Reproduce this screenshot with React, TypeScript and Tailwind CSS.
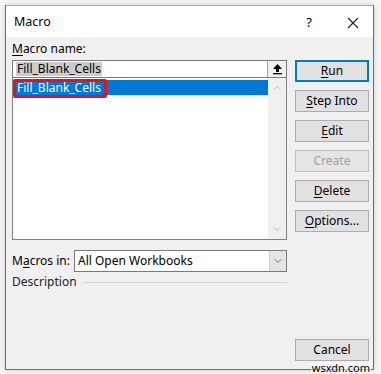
import { ChevronDown, ChevronUp } from 'lucide-react'

function Btn({ label, u, rest, primary, disabled }: { label?: string; u?: string; rest?: string; primary?: boolean; disabled?: boolean }) {
  return (
    <div
      className={`h-[22px] w-[74px] flex items-center justify-center text-[12px] bg-[#e1e1e1] ${
        primary ? 'border-2 border-[#0078d7]' : 'border border-[#adadad]'
      } ${disabled ? 'text-[#a0a0a0] border-[#bfbfbf] bg-[#e5e5e5]' : 'text-black'}`}
    >
      {u ? (
        <span>
          <span className="underline underline-offset-2">{u}</span>
          {rest}
        </span>
      ) : (
        label
      )}
    </div>
  )
}

export default function App() {
  return (
    <div className="w-[381px] h-[374px] bg-[#f7f7f7] pt-[5px] pl-[5px]" style={{ fontFamily: '"Noto Sans", "Open Sans", sans-serif' }}>
      <div className="relative w-[369px] h-[365px] bg-[#f0f0f0] border border-[#6d6d6d] border-t-[#a8a8a8] shadow-[0_0_6px_rgba(0,0,0,0.18)] flex flex-col">
        {/* title bar */}
        <div className="h-[31px] bg-white flex items-center pl-[8px] pt-[2px] text-[12.5px] text-black">
          <span className="flex-1">Macro</span>
          <span className="w-[20px] text-center mr-[28px] text-[13px]">?</span>
          <svg width="12" height="12" viewBox="0 0 12 12" className="mr-[14px]">
            <path d="M1 1 L11 11 M11 1 L1 11" stroke="#222" strokeWidth="1.1" />
          </svg>
        </div>

        <div className="flex flex-1 pl-[6px] pr-[4px]">
          {/* left column */}
          <div className="w-[275px] flex flex-col">
            <div className="h-[23px] pt-[5px] text-[12px] leading-[14px]">
              <span className="underline underline-offset-2">M</span>acro name:
            </div>
            <div className="h-[18px] bg-white border border-[#7a7a7a] flex items-center pl-[3px] relative">
              <span className="bg-[#cccccc] text-[12px] leading-[14px] px-px">Fill_Blank_Cells</span>
              <div className="absolute right-0 top-0 h-[16px] w-[19px] border-l border-[#a0a0a0] bg-[#f0f0f0] flex items-center justify-center">
                <svg width="11" height="12" viewBox="0 0 11 12">
                  <path d="M5.5 1 L10 6 L7 6 L7 9 L4 9 L4 6 L1 6 Z" fill="#000" />
                  <rect x="1" y="10" width="9" height="1.3" fill="#000" />
                </svg>
              </div>
            </div>
            <div className="h-[162px] bg-white border border-[#828282] border-t-0 flex relative">
              <div className="flex-1 pt-[2px] pl-px">
                <div className="h-[15px] bg-[#0078d7] text-white text-[12px] leading-[15px] pl-[3px]">Fill_Blank_Cells</div>
              </div>
              <div className="w-[18px] bg-[#f0f0f0] flex flex-col items-center justify-between py-[4px] text-[#bdbdbd]">
                <ChevronUp size={12} strokeWidth={2} />
                <ChevronDown size={12} strokeWidth={2} />
              </div>
              <div className="absolute left-0 top-[1px] w-[94px] h-[19px] border-[3px] border-[#e0141e] rounded-[2px]" />
            </div>
            <div className="flex items-center mt-[10px] h-[22px]">
              <span className="w-[62px] text-[12px]">
                M<span className="underline underline-offset-2">a</span>cros in:
              </span>
              <div className="flex-1 h-[22px] bg-white border border-[#7a7a7a] flex items-center">
                <span className="flex-1 pl-[3px] text-[12px]">All Open Workbooks</span>
                <div className="w-[17px] h-[20px] bg-[#e5e5e5] border-l border-[#cfcfcf] flex items-center justify-center text-[#555]">
                  <ChevronDown size={12} strokeWidth={1.5} />
                </div>
              </div>
            </div>
            <div className="flex items-center h-[20px]">
              <span className="text-[12px] text-[#222]">Description</span>
              <div className="flex-1 ml-[6px] h-px bg-[#d6d6d6]" />
            </div>
          </div>

          {/* right buttons */}
          <div className="ml-[8px] flex flex-col pt-[23px] pb-[8px]">
            <div className="flex flex-col gap-[8px]">
              <Btn u="R" rest="un" primary />
              <Btn u="S" rest="tep Into" />
              <Btn u="E" rest="dit" />
              <Btn label="Create" disabled />
              <Btn u="D" rest="elete" />
              <Btn u="O" rest="ptions..." />
            </div>
            <div className="mt-auto">
              <Btn label="Cancel" />
            </div>
          </div>
        </div>
        <span className="absolute right-[2px] -bottom-[4px] text-[11px] leading-[11px] text-black bg-white/60 px-px">wsxdn.com</span>
      </div>
    </div>
  )
}
